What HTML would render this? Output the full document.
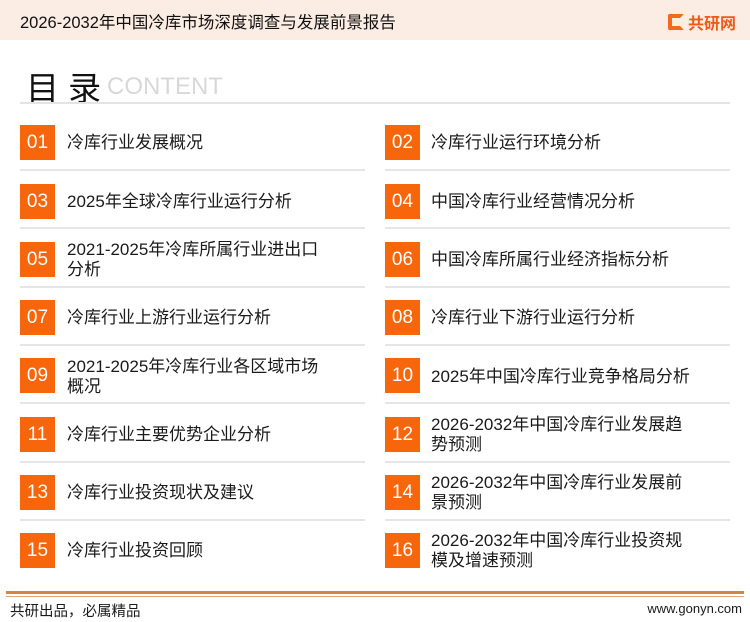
<!DOCTYPE html>
<html><head><meta charset="utf-8"><style>
*{margin:0;padding:0;box-sizing:border-box}
body{width:750px;height:622px;background:#fff;position:relative;overflow:hidden;font-family:"Liberation Sans","Noto Sans CJK SC",sans-serif;color:#1a1a1a}
.hdr{position:absolute;left:0;top:0;width:750px;height:40px;background:#fcede4}
.hdr .t{position:absolute;left:20px;top:9px;font-size:16.5px;color:#111}
.logo{position:absolute;left:668px;top:10px;font-size:16px;font-weight:bold;color:#f05a14;display:flex;align-items:center;gap:4px}
.logo i{display:inline-block;width:16px;height:16px;border:4px solid #f26a1a;border-right-color:transparent;border-radius:2px}
.title{position:absolute;left:26px;top:62px;font-size:33px;color:#111;letter-spacing:0}
.ct{position:absolute;left:107px;top:73px;font-size:24px;color:#d8d8d8}
.dv{position:absolute;left:20px;top:102px;width:710px;height:2px;background:#e4e4e4}
.box{position:absolute;width:35px;height:35px;background:#f8660c;color:#fff;font-size:19px;text-align:center;line-height:35px}
.tx{position:absolute;font-size:17px;line-height:20px;color:#1a1a1a}
.sep{position:absolute;height:2px;background:#e6e6e6}
.f1{position:absolute;left:6px;top:591px;width:738px;height:3px;background:#d8833f}
.f2{position:absolute;left:6px;top:596px;width:738px;height:1px;background:#e1a572}
.fl{position:absolute;left:10px;top:600px;font-size:14.5px}
.fr{position:absolute;right:8px;top:601px;font-size:13px}
</style></head><body>
<div class="hdr"><div class="t">2026-2032年中国冷库市场深度调查与发展前景报告</div><div class="logo"><i></i>共研网</div></div>
<div class="title">目 录</div><div class="ct">CONTENT</div>
<div class="dv"></div>

<div class="box" style="left:20px;top:125px">01</div><div class="tx" style="left:67px;top:133px">冷库行业发展概况</div>
<div class="box" style="left:385px;top:125px">02</div><div class="tx" style="left:431px;top:133px">冷库行业运行环境分析</div>
<div class="box" style="left:20px;top:184px">03</div><div class="tx" style="left:67px;top:192px">2025年全球冷库行业运行分析</div>
<div class="box" style="left:385px;top:184px">04</div><div class="tx" style="left:431px;top:192px">中国冷库行业经营情况分析</div>
<div class="box" style="left:20px;top:242px">05</div><div class="tx" style="left:67px;top:240px">2021-2025年冷库所属行业进出口<br>分析</div>
<div class="box" style="left:385px;top:242px">06</div><div class="tx" style="left:431px;top:250px">中国冷库所属行业经济指标分析</div>
<div class="box" style="left:20px;top:300px">07</div><div class="tx" style="left:67px;top:308px">冷库行业上游行业运行分析</div>
<div class="box" style="left:385px;top:300px">08</div><div class="tx" style="left:431px;top:308px">冷库行业下游行业运行分析</div>
<div class="box" style="left:20px;top:358px">09</div><div class="tx" style="left:67px;top:357px">2021-2025年冷库行业各区域市场<br>概况</div>
<div class="box" style="left:385px;top:358px">10</div><div class="tx" style="left:431px;top:367px">2025年中国冷库行业竞争格局分析</div>
<div class="box" style="left:20px;top:417px">11</div><div class="tx" style="left:67px;top:425px">冷库行业主要优势企业分析</div>
<div class="box" style="left:385px;top:417px">12</div><div class="tx" style="left:431px;top:415px">2026-2032年中国冷库行业发展趋<br>势预测</div>
<div class="box" style="left:20px;top:475px">13</div><div class="tx" style="left:67px;top:483px">冷库行业投资现状及建议</div>
<div class="box" style="left:385px;top:475px">14</div><div class="tx" style="left:431px;top:473px">2026-2032年中国冷库行业发展前<br>景预测</div>
<div class="box" style="left:20px;top:533px">15</div><div class="tx" style="left:67px;top:541px">冷库行业投资回顾</div>
<div class="box" style="left:385px;top:533px">16</div><div class="tx" style="left:431px;top:531px">2026-2032年中国冷库行业投资规<br>模及增速预测</div>

<div class="sep" style="left:20px;width:345px;top:169px"></div><div class="sep" style="left:385px;width:345px;top:169px"></div>
<div class="sep" style="left:20px;width:345px;top:227px"></div><div class="sep" style="left:385px;width:345px;top:227px"></div>
<div class="sep" style="left:20px;width:345px;top:286px"></div><div class="sep" style="left:385px;width:345px;top:286px"></div>
<div class="sep" style="left:20px;width:345px;top:344px"></div><div class="sep" style="left:385px;width:345px;top:344px"></div>
<div class="sep" style="left:20px;width:345px;top:402px"></div><div class="sep" style="left:385px;width:345px;top:402px"></div>
<div class="sep" style="left:20px;width:345px;top:461px"></div><div class="sep" style="left:385px;width:345px;top:461px"></div>
<div class="sep" style="left:20px;width:345px;top:519px"></div><div class="sep" style="left:385px;width:345px;top:519px"></div>

<div class="f1"></div><div class="f2"></div>
<div class="fl">共研出品，必属精品</div><div class="fr">www.gonyn.com</div>
</body></html>
